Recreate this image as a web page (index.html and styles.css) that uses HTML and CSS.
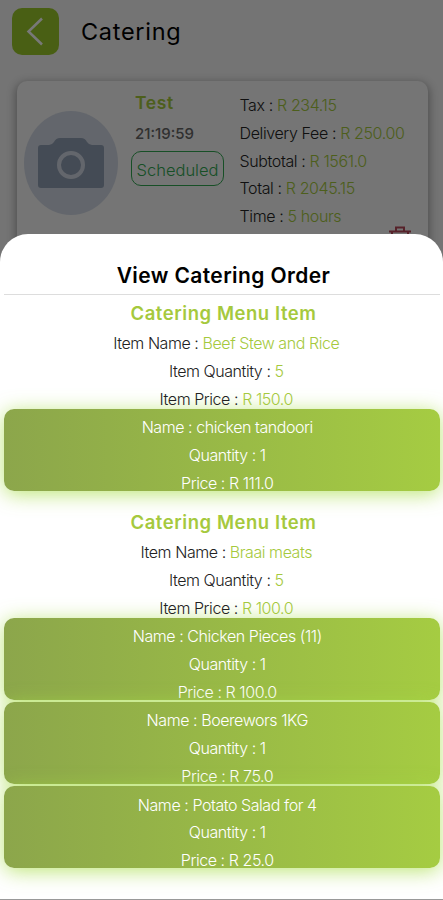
FILE: index.html
```html
<!DOCTYPE html>
<html lang="en">
<head>
  <meta charset="UTF-8" />
  <meta name="viewport" content="width=device-width, initial-scale=1.0"/>
  <title>Catering</title>
  <link rel="stylesheet" href="styles.css">
</head>
<body>
  <div class="page">
    <header class="topbar">
      <button class="back" aria-label="Back">
        <svg width="47" height="47" viewBox="0 0 47 47"><path d="M30 10.5 L16.5 23.5 L30 36.5"/></svg>
      </button>
      <h1>Catering</h1>
    </header>

    <div class="order">
      <div class="avatar">
        <svg width="66" height="50" viewBox="0 0 66 50">
          <path d="M3 7H11Q14 7 16 4Q18 0 22 0H43Q47 0 49 4Q51 7 54 7H63Q66 7 66 10V47Q66 50 63 50H3Q0 50 0 47V10Q0 7 3 7Z"/>
          <circle cx="33" cy="27" r="12"/>
        </svg>
      </div>
      <div class="info">
        <div class="name">Test</div>
        <div class="clock">21:19:59</div>
        <div class="status">Scheduled</div>
      </div>
      <div class="totals">
        <p>Tax : <b>R 234.15</b></p>
        <p>Delivery Fee : <b>R 250.00</b></p>
        <p>Subtotal : <b>R 1561.0</b></p>
        <p>Total : <b>R 2045.15</b></p>
        <p>Time : <b>5 hours</b></p>
      </div>
      <svg class="trash" width="22" height="24" viewBox="0 0 22 24">
        <path d="M0 5.5H22M7 5V1.5H15V5M3 6V23H19V6"/>
      </svg>
    </div>
  </div>

  <div class="overlay"></div>

  <div class="sheet">
    <h2>View Catering Order</h2>

    <section class="item">
      <h3>Catering Menu Item</h3>
      <p>Item Name : <b>Beef Stew and Rice</b></p>
      <p>Item Quantity : <b>5</b></p>
      <p>Item Price : <b>R 150.0</b></p>
      <div class="options">
        <div class="option">
          <p>Name : chicken tandoori</p>
          <p>Quantity : 1</p>
          <p>Price : R 111.0</p>
        </div>
      </div>
    </section>

    <section class="item">
      <h3>Catering Menu Item</h3>
      <p>Item Name : <b>Braai meats</b></p>
      <p>Item Quantity : <b>5</b></p>
      <p>Item Price : <b>R 100.0</b></p>
      <div class="options">
        <div class="option">
          <p>Name : Chicken Pieces (11)</p>
          <p>Quantity : 1</p>
          <p>Price : R 100.0</p>
        </div>
        <div class="option">
          <p>Name : Boerewors 1KG</p>
          <p>Quantity : 1</p>
          <p>Price : R 75.0</p>
        </div>
        <div class="option">
          <p>Name : Potato Salad for 4</p>
          <p>Quantity : 1</p>
          <p>Price : R 25.0</p>
        </div>
      </div>
    </section>
  </div>
</body>
</html>
```
FILE: styles.css
```css
:root {
  --green: #a5c93d;
  --green-dark: #8ca64b;
  --text: #222;
}

* {
  box-sizing: border-box;
}

body {
  margin: 0;
  height: 900px;
  position: relative;
  overflow: hidden;
  font-family: 'Inter', sans-serif;
  font-size: 16px;
  font-weight: 300;
  color: var(--text);
  background: #fff;
}

h1, h2, h3, p {
  margin: 0;
}

p {
  line-height: 27.8px;
  letter-spacing: -0.44px;
  white-space: nowrap;
}

b {
  font-weight: 300;
  color: var(--green);
}

.page {
  height: 900px;
  padding: 8px 15px 0 12px;
  background: #f6f6f6;
}

.topbar {
  display: flex;
  align-items: center;
  gap: 22px;
}

.back {
  width: 47px;
  height: 47px;
  padding: 0;
  border: none;
  border-radius: 10px;
  background: #9ccb2c;
}

.back svg {
  display: block;
  fill: none;
  stroke: #fff;
  stroke-width: 2.5;
}

h1 {
  font-size: 23.5px;
  font-weight: 400;
  letter-spacing: 0.7px;
  color: #000;
}

.order {
  position: relative;
  display: flex;
  height: 180px;
  margin: 26px 0 0 5px;
  padding-left: 7px;
  border-radius: 10px;
  background: #f8f8f8;
  box-shadow: 0 3px 9px 2px rgba(0, 0, 0, 0.3);
}

.avatar {
  display: flex;
  align-items: center;
  justify-content: center;
  width: 94px;
  height: 104px;
  margin-top: 30px;
  border-radius: 50%;
  background: #d2d9e5;
}

.avatar svg {
  fill: #919fb4;
}

.avatar circle {
  fill: none;
  stroke: #d2d9e5;
  stroke-width: 4;
}

.info {
  width: 93px;
  margin: 9px 0 0 13px;
}

.name {
  padding-left: 4px;
  font-size: 17.5px;
  font-weight: 600;
  line-height: 26px;
  letter-spacing: 0.6px;
  color: var(--green);
}

.clock {
  padding: 6px 0 0 4px;
  font-size: 15px;
  font-weight: 500;
  line-height: 24px;
  letter-spacing: 0;
  color: #666;
}

.status {
  height: 35px;
  margin-top: 5px;
  border: 1.5px solid #32a852;
  border-radius: 10px;
  font-size: 16.5px;
  line-height: 36px;
  text-align: center;
  color: #32a852;
}

.totals {
  margin: 11px 0 0 15.5px;
}

.totals p {
  letter-spacing: -0.38px;
}

.trash {
  position: absolute;
  top: 145px;
  right: 17px;
  fill: none;
  stroke: #b8485a;
  stroke-width: 2;
}

.overlay {
  position: absolute;
  inset: 0;
  background: rgba(0, 0, 0, 0.53);
}

.sheet {
  position: absolute;
  top: 234px;
  left: 0;
  right: 0;
  bottom: 0;
  padding: 0 3.5px;
  border-bottom: 1px solid #999;
  border-radius: 28px 28px 0 0;
  background: #fff;
  text-align: center;
}

h2 {
  height: 61px;
  padding: 27px 0 0 4px;
  border-bottom: 1px solid #ddd;
  font-size: 21px;
  font-weight: 600;
  line-height: 30px;
  letter-spacing: 0.4px;
  color: #000;
}

.item {
  height: 209px;
  padding-top: 4px;
}

h3 {
  height: 31.3px;
  padding-left: 4px;
  font-size: 18.5px;
  font-weight: 600;
  line-height: 29px;
  letter-spacing: 0.55px;
  color: var(--green);
}

.item > p {
  position: relative;
  z-index: 1;
  padding-left: 9.5px;
}

.options {
  display: grid;
  gap: 2.5px;
  margin-top: -4.7px;
}

.option {
  height: 81.7px;
  padding: 5.2px 0 0 11.5px;
  border-radius: 10px;
  background: linear-gradient(90deg, var(--green-dark), #a5cc42);
  box-shadow: 0 3px 20px rgba(165, 220, 70, 0.75);
  color: #fff;
}
```
